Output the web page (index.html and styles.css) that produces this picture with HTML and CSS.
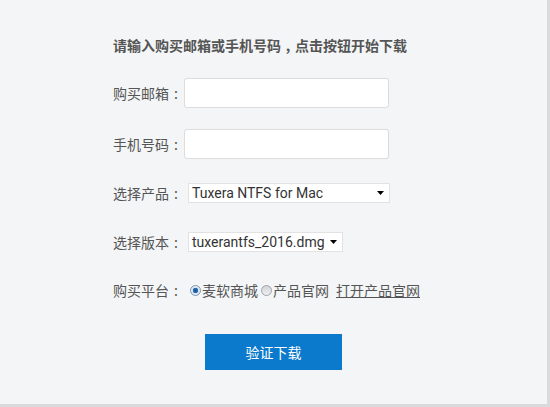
FILE: index.html
```html
<!DOCTYPE html>
<html lang="zh-CN">
<head>
<meta charset="utf-8">
<title>验证下载</title>
<link rel="stylesheet" href="styles.css">
</head>
<body>
<div class="frame">
  <form class="form">
    <h1 class="title">请输入购买邮箱或手机号码<span class="punct">,</span>点击按钮开始下载</h1>

    <div class="row row-email">
      <label class="label">购买邮箱<span class="punct">:</span></label>
      <input class="text-input" type="text">
    </div>

    <div class="row row-phone">
      <label class="label">手机号码<span class="punct">:</span></label>
      <input class="text-input" type="text">
    </div>

    <div class="row row-product">
      <label class="label">选择产品<span class="punct">:</span></label>
      <div class="select select-product">
        <span class="select-value">Tuxera NTFS for Mac</span>
        <svg class="arrow" width="7" height="4" viewBox="0 0 7 4"><path d="M0 0H7L3.5 4Z" fill="#000"/></svg>
      </div>
    </div>

    <div class="row row-version">
      <label class="label">选择版本<span class="punct">:</span></label>
      <div class="select select-version">
        <span class="select-value">tuxerantfs_2016.dmg</span>
        <svg class="arrow" width="7" height="4" viewBox="0 0 7 4"><path d="M0 0H7L3.5 4Z" fill="#000"/></svg>
      </div>
    </div>

    <div class="row row-platform">
      <label class="label">购买平台<span class="punct">:</span></label>
      <span class="radio radio-checked"></span><span class="opt">麦软商城</span>
      <span class="radio radio-second"></span><span class="opt">产品官网</span>
      <a class="link" href="#">打开产品官网</a>
    </div>

    <div class="actions">
      <button class="btn" type="button">验证下载</button>
    </div>
  </form>
</div>
</body>
</html>
```

FILE: styles.css
```css
html, body {
  margin: 0;
  padding: 0;
}
body {
  background: #f4f5f7;
  font-family: "Noto Sans CJK SC", "Microsoft YaHei", sans-serif;
  color: #555;
}
.frame {
  width: 547px;
  height: 404px;
  border-right: 3px solid #d9dadc;
  border-bottom: 3px solid #d9dadc;
  background: #f4f5f7;
  overflow: hidden;
}
.form {
  padding: 37px 0 0 113px;
}
.title {
  margin: 0;
  font-size: 14px;
  line-height: 16px;
  font-weight: bold;
  color: #555;
}
.punct {
  display: inline-block;
  width: 14px;
  text-align: center;
}
.row {
  display: flex;
  align-items: center;
  font-size: 14px;
}
.label {
  width: 70px;
  line-height: 20px;
  color: #555;
  flex: none;
}
.row-email { margin-top: 25px; height: 30px; }
.row-phone { margin-top: 21px; height: 30px; }
.row-product { margin-top: 24px; height: 20px; }
.row-version { margin-top: 29px; height: 20px; }
.row-platform { margin-top: 28px; height: 20px; }

.text-input {
  margin: 0 0 0 1px;
  width: 205px;
  height: 30px;
  box-sizing: border-box;
  border: 1px solid #dcdcdc;
  border-radius: 3px;
  background: #fff;
  box-shadow: 0 0 1px rgba(0,0,0,0.05);
  padding: 0 6px;
  outline: none;
}
.select {
  margin-left: 5px;
  height: 20px;
  box-sizing: border-box;
  border: 1px solid #e2e2e2;
  background: #fff;
  display: flex;
  align-items: center;
  justify-content: space-between;
  padding: 0 5px 0 3px;
  font-family: Roboto, "DejaVu Sans", sans-serif;
  font-size: 14px;
  color: #333;
}
.select-product { width: 202px; }
.select-version { width: 155px; }
.select-value {
  line-height: 18px;
  white-space: nowrap;
}
.arrow { flex: none; }

.radio {
  flex: none;
  width: 11px;
  height: 11px;
  box-sizing: border-box;
  border-radius: 50%;
  border: 1px solid #9ea3aa;
  background: linear-gradient(#d2d4d8, #eeeff1);
  margin-right: 1px;
}
.radio-checked {
  margin-left: 7px;
  border-color: #7d96b3;
  background: radial-gradient(circle, #1d4f8c 0, #2a6fb7 2.5px, #d7e4f2 3px, #f1f5fa 100%);
}
.radio-second {
  margin-left: 3px;
}
.opt {
  line-height: 20px;
  color: #555;
}
.link {
  margin-left: 7px;
  color: #555;
  text-decoration: underline;
  line-height: 20px;
}
.actions {
  margin-top: 34px;
  padding-left: 92px;
}
.btn {
  display: block;
  width: 137px;
  height: 36px;
  border: 0;
  margin: 0;
  background: #0b7acc;
  color: #fff;
  font-family: "Noto Sans CJK SC", "Microsoft YaHei", sans-serif;
  font-size: 14px;
  padding: 0;
}
```
